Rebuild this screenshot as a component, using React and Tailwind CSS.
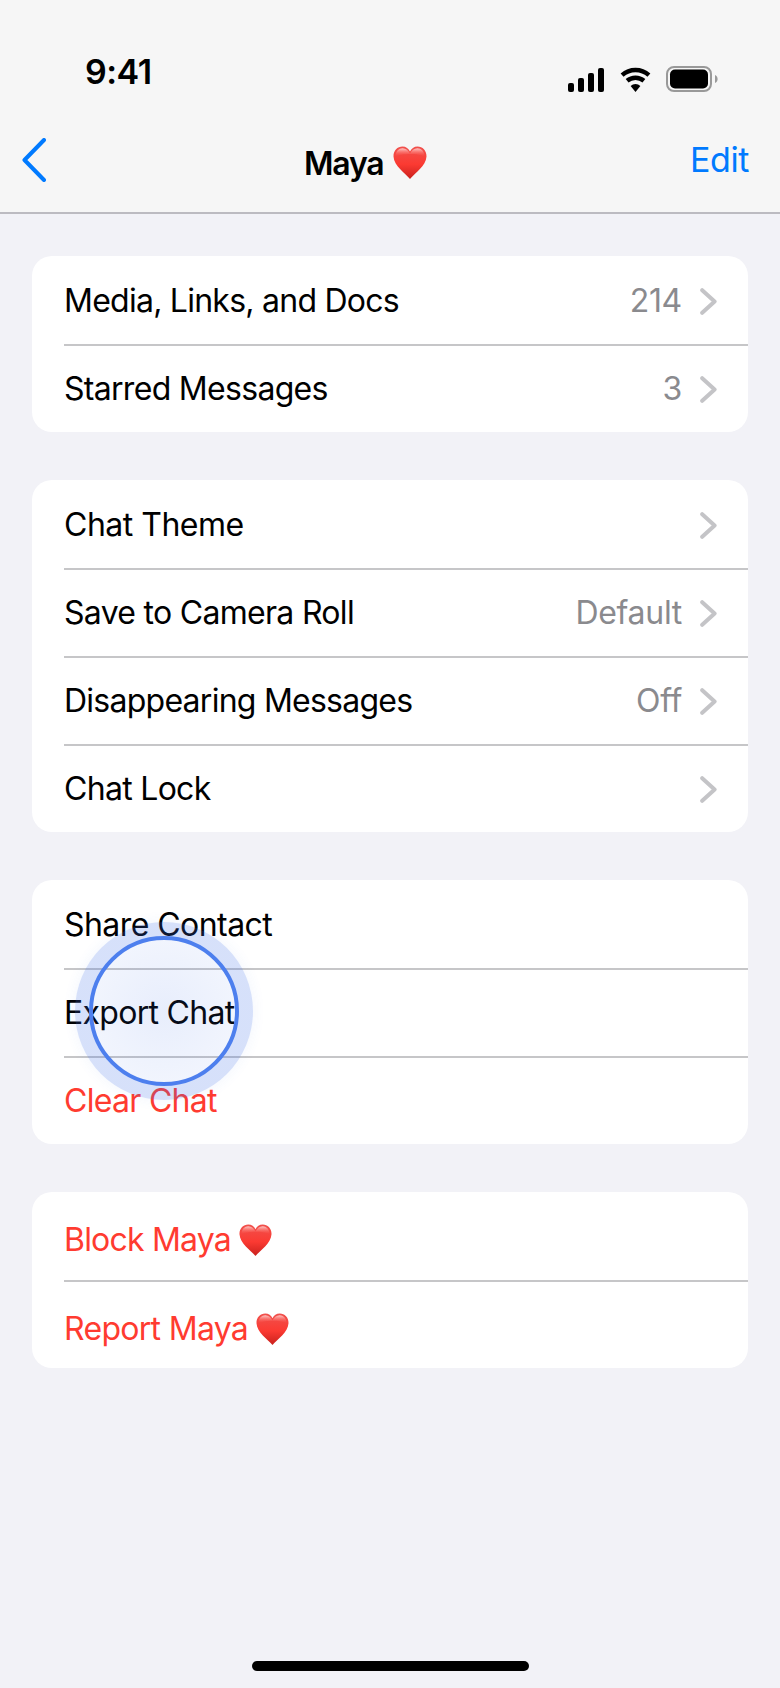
import React from 'react';

function Heart({ className }) {
  return (
    <svg viewBox="0 0 34 34" className={className}>
      <defs>
        <linearGradient id="heartFill" x1="0" y1="0" x2="0" y2="1">
          <stop offset="0" stopColor="#f0514d" />
          <stop offset="0.55" stopColor="#fb3a32" />
          <stop offset="1" stopColor="#c9211d" />
        </linearGradient>
        <linearGradient id="heartShine" x1="0" y1="0" x2="0" y2="1">
          <stop offset="0" stopColor="#ffd2d0" stopOpacity="0.95" />
          <stop offset="1" stopColor="#ff5a52" stopOpacity="0" />
        </linearGradient>
      </defs>
      <path
        d="M17 33 C12 27 1 20 .5 10.5 C.3 4.5 4.5 .5 9.5 .5 C13 .5 15.6 2.6 17 5.4 C18.4 2.6 21 .5 24.5 .5 C29.5 .5 33.7 4.5 33.5 10.5 C33 20 22 27 17 33 Z"
        fill="url(#heartFill)"
      />
      <path
        d="M2.5 10.5 C2.5 5 6 2.2 9.5 2.2 C13 2.2 15.6 4.5 17 7.6 C18.4 4.5 21 2.2 24.5 2.2 C28 2.2 31.5 5 31.5 10.5 C26 7 8 7 2.5 10.5 Z"
        fill="url(#heartShine)"
      />
    </svg>
  );
}

function Chevron() {
  return (
    <svg viewBox="0 0 17 27" className="w-[17px] h-[27px] ml-[18px] mr-[31px]" fill="none">
      <path d="M2.2 2.2 L14.6 13.5 L2.2 24.8" stroke="#c4c4c7" strokeWidth="4" strokeLinecap="round" strokeLinejoin="round" />
    </svg>
  );
}

function Row({ label, value, red, heart, chevron, first, last, low, track = 'tracking-[-0.7px]' }) {
  return (
    <>
      <div className={`flex items-center pl-8 ${first ? 'h-[88px]' : 'h-[86px]'} ${low ? 'pt-[8px]' : first ? 'pt-[2px]' : ''}`}>
        <span className={`text-[32px] ${track} leading-none ${red ? 'text-[#ff3b30]' : 'text-black'}`}>{label}</span>
        {heart && <Heart className="w-[33px] h-[33px] ml-[8px]" />}
        {value && <span className="ml-auto text-[32px] tracking-[-0.3px] leading-none text-[#8a8a8e]">{value}</span>}
        {chevron && <div className={value ? '' : 'ml-auto'}><Chevron /></div>}
      </div>
      {!last && <div className="ml-8 h-[2px] bg-[#c6c6c8]" />}
    </>
  );
}

function Card({ rows }) {
  return (
    <div className="bg-white rounded-[20px] overflow-hidden">
      {rows.map((row, i) => (
        <Row key={i} {...row} first={i === 0} last={i === rows.length - 1} />
      ))}
    </div>
  );
}

const groups = [
  [
    { label: 'Media, Links, and Docs', value: '214', chevron: true, track: 'tracking-[-0.75px]' },
    { label: 'Starred Messages', value: '3', chevron: true },
  ],
  [
    { label: 'Chat Theme', chevron: true, track: 'tracking-[-0.5px]' },
    { label: 'Save to Camera Roll', value: 'Default', chevron: true },
    { label: 'Disappearing Messages', value: 'Off', chevron: true, track: 'tracking-[-0.75px]' },
    { label: 'Chat Lock', chevron: true },
  ],
  [
    { label: 'Share Contact', track: 'tracking-[-0.55px]' },
    { label: 'Export Chat' },
    { label: 'Clear Chat', red: true },
  ],
  [
    { label: 'Block Maya', red: true, heart: true, low: true, track: 'tracking-[-0.8px]' },
    { label: 'Report Maya', red: true, heart: true, low: true },
  ],
];

export default function App() {
  return (
    <div
      className="relative w-[780px] h-[1688px] overflow-hidden bg-[#f2f2f7] flex flex-col"
      style={{ fontFamily: 'Inter, "Liberation Sans", sans-serif' }}
    >
      <header className="h-[214px] bg-[#f6f6f6] border-b-2 border-[#bcbbc1] flex flex-col">
        <div className="flex h-[120px] items-start pt-[50px]">
          <span className="ml-[85px] text-[34px] font-semibold leading-[44px] tracking-[-0.5px] text-black">9:41</span>
          <svg viewBox="0 0 150 26" className="ml-auto mr-[62px] mt-[16px] w-[150px] h-[26px]">
            <rect x="0" y="17" width="6" height="9" rx="2" fill="#000" />
            <rect x="10" y="12" width="6" height="14" rx="2" fill="#000" />
            <rect x="20" y="7" width="6" height="19" rx="2" fill="#000" />
            <rect x="30" y="2" width="6" height="24" rx="2" fill="#000" />
            <path d="M54.1 9.1 A20 20 0 0 1 80.9 9.1" fill="none" stroke="#000" strokeWidth="4.4" />
            <path d="M59.1 14.8 A13 13 0 0 1 75.9 14.8" fill="none" stroke="#000" strokeWidth="4.4" />
            <path d="M62.6 20 A7 7 0 0 1 72.4 20 L67.5 26 Z" fill="#000" />
            <rect x="99" y="1" width="44" height="24" rx="7" fill="none" stroke="#999999" strokeWidth="2" />
            <rect x="102" y="3.5" width="38" height="19" rx="5" fill="#000" />
            <path d="M147 9 C149 10 149.6 11.5 149.6 13 C149.6 14.5 149 16 147 17 Z" fill="#9a9a9a" />
          </svg>
        </div>
        <div className="flex items-center h-[80px] pl-[22px]">
          <svg viewBox="0 0 24 44" className="w-[24px] h-[44px]" fill="none">
            <path d="M22 2 L2.5 22 L22 42" stroke="#007aff" strokeWidth="4" strokeLinecap="round" strokeLinejoin="round" />
          </svg>
          <span className="ml-[258px] pt-[8px] text-[32px] font-semibold tracking-[-1.2px] leading-none text-black">Maya</span>
          <Heart className="w-[34px] h-[34px] ml-[9px] mt-[6px]" />
          <span className="ml-auto mr-[31px] text-[34px] tracking-[-0.4px] leading-none text-[#007aff]">Edit</span>
        </div>
      </header>

      <main className="flex flex-col gap-12 px-8 pt-[42px]">
        {groups.map((rows, i) => (
          <Card key={i} rows={rows} />
        ))}
      </main>

      {/* tap indicator over Export Chat */}
      <div className="absolute left-[75px] top-[922px] w-[178px] h-[178px] rounded-full shadow-[0_0_14px_rgba(63,111,232,0.07)] bg-[radial-gradient(circle_closest-side,rgba(63,111,232,0.12)_0%,rgba(63,111,232,0.07)_82%,rgba(63,111,232,0.21)_84%,rgba(63,111,232,0.21)_100%)] flex items-center justify-center">
        <div className="w-[150px] h-[150px] rounded-full border-4 border-[#4d7fee]" />
      </div>

      <div className="mt-auto mb-[17px] mx-auto w-[277px] h-[10px] rounded-full bg-black" />
    </div>
  );
}
